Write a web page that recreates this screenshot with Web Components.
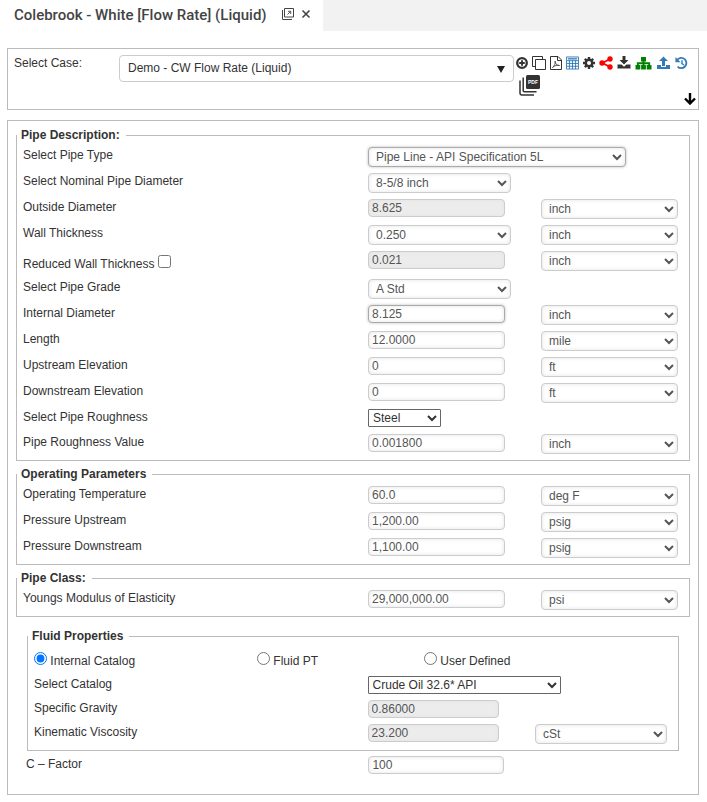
<!DOCTYPE html>
<html lang="en">
<head>
<meta charset="utf-8">
<meta name="viewport" content="width=device-width, initial-scale=1">
<title>Colebrook - White [Flow Rate] (Liquid)</title>
<style>
  body {
    margin: 0;
    background: #fff;
    color: #333;
    font: 12px/16px "Liberation Sans", Arial, sans-serif;
  }
  main {
    display: flex;
    flex-direction: column;
    gap: 10px;
    padding: 17px 8px 8px 7px;
  }
</style>
</head>
<body>
  <page-tab>Colebrook - White [Flow Rate] (Liquid)</page-tab>

  <main>
    <case-bar></case-bar>

    <form-panel>
      <field-group legend="Pipe Description:">
        <form-row label="Select Pipe Type" select="Pipe Line - API Specification 5L" wide active></form-row>
        <form-row label="Select Nominal Pipe Diameter" select="8-5/8 inch"></form-row>
        <form-row label="Outside Diameter" value="8.625" unit="inch" locked></form-row>
        <form-row label="Wall Thickness" select="0.250" unit="inch"></form-row>
        <form-row label="Reduced Wall Thickness" value="0.021" unit="inch" locked check></form-row>
        <form-row label="Select Pipe Grade" select="A Std"></form-row>
        <form-row label="Internal Diameter" value="8.125" unit="inch" active></form-row>
        <form-row label="Length" value="12.0000" unit="mile"></form-row>
        <form-row label="Upstream Elevation" value="0" unit="ft"></form-row>
        <form-row label="Downstream Elevation" value="0" unit="ft"></form-row>
        <form-row label="Select Pipe Roughness" select="Steel" plain="small"></form-row>
        <form-row label="Pipe Roughness Value" value="0.001800" unit="inch"></form-row>
      </field-group>

      <field-group legend="Operating Parameters">
        <form-row label="Operating Temperature" value="60.0" unit="deg F"></form-row>
        <form-row label="Pressure Upstream" value="1,200.00" unit="psig"></form-row>
        <form-row label="Pressure Downstream" value="1,100.00" unit="psig"></form-row>
      </field-group>

      <field-group legend="Pipe Class:">
        <form-row label="Youngs Modulus of Elasticity" value="29,000,000.00" unit="psi"></form-row>
      </field-group>

      <field-group legend="Fluid Properties" inset>
        <fluid-source></fluid-source>
        <form-row label="Select Catalog" select="Crude Oil 32.6* API" plain="large" compact></form-row>
        <form-row label="Specific Gravity" value="0.86000" locked compact></form-row>
        <form-row label="Kinematic Viscosity" value="23.200" unit="cSt" locked></form-row>
      </field-group>

      <form-row slot="footer" label="C – Factor" value="100"></form-row>
    </form-panel>
  </main>

<script>
// Small helper: every element clones its template into an open shadow root
class BaseElement extends HTMLElement {
  constructor () {
    super();
    this.attachShadow({ mode: "open" });
  }
  connectedCallback () {
    const template = document.createElement("template");
    template.innerHTML = this.getStyles() + this.getTemplate();
    this.shadowRoot.replaceChildren(template.content.cloneNode(true));
  }
}

// Icon shapes, each with its own viewBox
const ICONS = {
  popout: ["0 0 12 12", `<g fill="none" stroke="currentColor"><path d="M2.500.5h9v8.500h-9z"/><path d="M.5 2v9.500H10"/><path d="M5.500 6.500l3-3M6 3.300h2.700V6" stroke-width=".9"/></g>`],
  close: ["0 0 10 10", `<path d="M1.500 1.500l7 7M8.500 1.500l-7 7" fill="none" stroke="currentColor" stroke-width="1.600"/>`],
  add: ["0 0 12 12", `<circle cx="6" cy="6" r="4.800" fill="none" stroke="currentColor" stroke-width="2.300"/><path d="M6 3.200v5.600M3.200 6h5.600" fill="none" stroke="currentColor" stroke-width="1.900"/>`],
  copy: ["0 0 14 14", `<path d="M3.500 3.500h10v10h-10zM3.500 10.500h-3v-10h10v3" fill="none" stroke="currentColor"/>`],
  pdf: ["0 0 12 14", `<g fill="none" stroke="currentColor"><path d="M.5.5H8l3.500 3.500v9.500H.5zM7.500.5v4h4"/><path d="M2.500 11.500c2-1.500 3.200-4.500 2.700-6.500-.6 2 1.500 4.500 4.300 4.500-2-.7-5 0-7 2z" stroke-width=".8"/></g>`],
  table: ["0 0 14 14", `<path d="M.5.5h13v13H.5z" fill="none" stroke="currentColor"/><path d="M2 2.500h10" stroke="currentColor" stroke-width="1.400"/><path d="M1 4.500h12M1 7.500h12M1 10.500h12M3.700 4v9.500M7 4v9.500M10.300 4v9.500" fill="none" stroke="currentColor"/>`],
  gear: ["0 0 12 12", `<g fill="none" stroke="currentColor"><circle cx="6" cy="6" r="3.200" stroke-width="2.400"/><path d="M6 0v2.500M6 9.500V12M0 6h2.500M9.500 6H12M1.800 1.800l1.700 1.700M8.500 8.500l1.700 1.700M1.800 10.200l1.700-1.700M8.500 3.500l1.700-1.700" stroke-width="2.400"/></g>`],
  share: ["0 0 14 14", `<path d="M11 3L3.500 7l7.500 4" fill="none" stroke="currentColor" stroke-width="1.900"/><g fill="currentColor"><circle cx="11" cy="3" r="2.700"/><circle cx="3" cy="7" r="2.700"/><circle cx="11" cy="11" r="2.700"/></g>`],
  download: ["0 0 14 14", `<path fill="currentColor" d="M5.500 0h3v4h3L7 8.500 2.500 4h3zM.5 8.500h4L7 10.700 9.500 8.500h4v4H.5z"/>`],
  tree: ["0 0 17 14", `<path fill="currentColor" d="M6 1h5v4.500H6zM.5 9h4.800v4.500H.5zM6.100 9h4.800v4.500H6.100zM11.700 9h4.800v4.500h-4.800z"/><path d="M8.500 4v6M2.800 10V7.200h11.400V10" fill="none" stroke="currentColor" stroke-width="1.900"/>`],
  upload: ["0 0 14 14", `<path fill="currentColor" d="M7 .5L11.500 5h-3v5h-3V5h-3zM.5 9h4v2h5V9h4v4H.5z"/>`],
  history: ["0 0 14 14", `<path d="M2.500 3.500a5.500 5.500 0 1 1 .3 7.300" fill="none" stroke="currentColor" stroke-width="2"/><path fill="currentColor" d="M.5.5v5.700h5.500z"/><path d="M7.500 4v3.700l2.200 1.500" fill="none" stroke="currentColor" stroke-width="1.500"/>`],
  pages: ["0 0 21 21", `<rect x="7" y="0" width="14" height="14" rx="1.500" fill="currentColor"/><path d="M4.200 2.500v13q0 1.200 1.200 1.200h12.100M1 5.500V18q0 2 2 2h12" fill="none" stroke="currentColor" stroke-width="1.500"/><text x="14" y="9" text-anchor="middle" font-family="Liberation Sans, Arial, sans-serif" font-size="5" font-weight="700" fill="#fff">PDF</text>`],
  down: ["0 0 12 12", `<path d="M6 0v10M1 5.500l5 5 5-5" fill="none" stroke="currentColor" stroke-width="2.400"/>`]
};

class ToolIcon extends BaseElement {
  getTemplate () {
    const [box, shape] = ICONS[this.getAttribute("name")];
    const w = this.getAttribute("width") || 14;
    const h = this.getAttribute("height") || 14;
    return `
      <button type="button" aria-label="${this.getAttribute("label")}">
        <svg viewBox="${box}" width="${w}" height="${h}" aria-hidden="true">${shape}</svg>
      </button>
    `;
  }
  getStyles () {
    return `
      <style>
        :host { display: block; }
        button {
          display: block;
          padding: 0;
          border: 0;
          background: none;
          color: inherit;
          cursor: pointer;
        }
        svg { display: block; }
      </style>
    `;
  }
}

class PageTab extends BaseElement {
  getTemplate () {
    return `
      <div class="tab">
        <h1><slot></slot></h1>
        <tool-icon name="popout" label="Open in new window" width="12" height="12"></tool-icon>
        <tool-icon name="close" label="Close tab" width="10" height="10"></tool-icon>
      </div>
    `;
  }
  getStyles () {
    return `
      <style>
        :host { display: flex; background: #f2f2f2; }
        .tab {
          display: flex;
          align-items: flex-start;
          padding: 0 12px 0 14px;
          background: #fff;
          color: #444;
        }
        h1 {
          margin: 0 15px 0 0;
          font: 500 15px/31px Roboto, "Liberation Sans", sans-serif;
        }
        tool-icon { margin-top: 8px; }
        tool-icon + tool-icon { margin: 9px 0 0 7px; }
      </style>
    `;
  }
}

class CaseBar extends BaseElement {
  getTemplate () {
    return `
      <label for="case">Select Case:</label>
      <div class="picker">
        <select id="case"><option>Demo - CW Flow Rate (Liquid)</option></select>
      </div>
      <div class="tools">
        <div class="line">
          <tool-icon name="add" label="Add case" width="12" height="12"></tool-icon>
          <tool-icon name="copy" label="Copy case"></tool-icon>
          <tool-icon name="pdf" label="Save as PDF" width="12"></tool-icon>
          <tool-icon name="table" label="Table" class="blue" width="13"></tool-icon>
          <tool-icon name="gear" label="Settings" width="12" height="12"></tool-icon>
          <tool-icon name="share" label="Share" class="red"></tool-icon>
          <tool-icon name="download" label="Download"></tool-icon>
          <tool-icon name="tree" label="Hierarchy" class="green" width="17"></tool-icon>
          <tool-icon name="upload" label="Upload" class="blue" width="15"></tool-icon>
          <tool-icon name="history" label="History" class="blue" width="13"></tool-icon>
        </div>
        <div class="line low">
          <tool-icon name="pages" label="All PDF reports" width="21" height="21"></tool-icon>
          <tool-icon name="down" label="Scroll down" class="black" width="12" height="12"></tool-icon>
        </div>
      </div>
    `;
  }
  getStyles () {
    return `
      <style>
        :host {
          display: flex;
          align-items: flex-start;
          padding: 6px 2px 4px 6px;
          border: 1px solid #bbb;
        }
        label { flex: 0 0 105px; }
        .picker {
          flex: 1;
          position: relative;
          margin-right: 2px;
        }
        .picker::after {
          content: "";
          position: absolute;
          top: 11px;
          right: 9px;
          border: 4px solid transparent;
          border-top: 7px solid #222;
          border-bottom: 0;
          pointer-events: none;
        }
        select {
          display: block;
          width: 100%;
          height: 27px;
          padding: 0 24px 2px 8px;
          border: 1px solid #ccc;
          border-radius: 4px;
          background: #fff;
          color: #333;
          font: inherit;
          appearance: none;
        }
        .tools {
          flex: 0 0 180px;
          display: flex;
          flex-direction: column;
          gap: 4px;
        }
        .line {
          display: flex;
          align-items: center;
          gap: 4px;
          height: 16px;
        }
        .low {
          align-items: flex-start;
          justify-content: space-between;
          height: 30px;
          padding-left: 3px;
        }
        .low .black { align-self: flex-end; color: #000; }
        .blue { color: #337ab7; }
        .red { color: #f00; }
        .green { color: #008000; }
      </style>
    `;
  }
}

class FormPanel extends BaseElement {
  getTemplate () {
    return `
      <form>
        <slot></slot>
        <div class="footer"><slot name="footer"></slot></div>
      </form>
    `;
  }
  getStyles () {
    return `
      <style>
        :host {
          display: block;
          padding: 6px 8px 12px;
          border: 1px solid #bbb;
        }
        form {
          display: flex;
          flex-direction: column;
          gap: 5px;
        }
        .footer { padding: 0 3px 0 4px; }
      </style>
    `;
  }
}

class FieldGroup extends BaseElement {
  getTemplate () {
    return `
      <fieldset>
        <legend>${this.getAttribute("legend")}</legend>
        <slot></slot>
      </fieldset>
    `;
  }
  getStyles () {
    return `
      <style>
        :host { display: block; }
        :host([inset]) { margin: 6px 11px 0; }
        fieldset {
          min-width: 0;
          margin: 0;
          padding: 4px 0 0;
          border: 1px solid #bbb;
        }
        legend {
          padding: 0 6px 0 4px;
          font-weight: 700;
        }
      </style>
    `;
  }
}

class FormRow extends BaseElement {
  getTemplate () {
    const label = this.getAttribute("label");
    const unit = this.getAttribute("unit");
    const check = this.hasAttribute("check")
      ? `<label class="check">${label} <input type="checkbox"></label>`
      : `<label for="field">${label}</label>`;
    return `
      ${check}
      <div class="field">${this.getControl(label)}</div>
      ${unit ? `<select class="unit" aria-label="${label} unit"><option>${unit}</option></select>` : ""}
    `;
  }
  getControl (label) {
    if (this.hasAttribute("select")) {
      return `<select id="field"><option>${this.getAttribute("select")}</option></select>`;
    }
    const locked = this.hasAttribute("locked") ? "readonly" : "";
    return `<input id="field" type="text" aria-label="${label}" value="${this.getAttribute("value")}" ${locked}>`;
  }
  getStyles () {
    return `
      <style>
        :host {
          display: grid;
          grid-template-columns: 345fr 173fr 148fr;
          align-items: start;
          min-height: 26px;
          padding-left: 6px;
        }
        :host([check]) { min-height: 28px; }
        :host([plain]) { min-height: 25px; }
        :host([compact]) { min-height: 24px; }
        .field {
          min-width: 0;
          padding-right: 36px;
        }
        .check { padding-top: 4px; }
        input[type=checkbox] {
          margin: 0;
          vertical-align: baseline;
        }
        select, input[type=text] {
          display: block;
          box-sizing: border-box;
          width: 100%;
          height: 18px;
          margin: 0;
          padding: 0 3px;
          border: 1px solid #ccc;
          border-radius: 4px;
          background: #fff;
          color: #555;
          font: inherit;
          line-height: normal;
          box-shadow: inset 0 0 4px #e4e4e4;
        }
        select { height: 20px; padding: 0 5px 0 3px; }
        .field select { width: calc(100% + 6px); }
        .unit { width: calc(100% - 11px); }
        input[readonly] { background: #ececec; }
        :host([active]) #field {
          border-color: #aaa;
          box-shadow: 0 0 3px #bbb, inset 0 0 4px #e4e4e4;
        }
        :host([wide]) .field { grid-column: 2 / 4; padding-right: 69px; }
        :host([plain]) #field {
          width: 73px;
          height: 18px;
          padding: 0;
          border-color: #666;
          border-radius: 1px;
          color: #333;
          box-shadow: none;
        }
        :host([plain=large]) .field { grid-column: 2 / 4; }
        :host([plain=large]) #field { width: 193px; }
      </style>
    `;
  }
}

class FluidSource extends BaseElement {
  getTemplate () {
    const radios = ["Internal Catalog", "Fluid PT", "User Defined"].map((text, i) => `
      <label><input type="radio" name="source" ${i === 0 ? "checked" : ""}> ${text}</label>
    `);
    return radios.join("");
  }
  getStyles () {
    return `
      <style>
        :host {
          display: grid;
          grid-template-columns: 223fr 167fr 254fr;
          min-height: 28px;
          padding-left: 6px;
        }
        label { padding-top: 4px; }
        input { margin: 0; vertical-align: baseline; }
      </style>
    `;
  }
}

customElements.define("tool-icon", ToolIcon);
customElements.define("page-tab", PageTab);
customElements.define("case-bar", CaseBar);
customElements.define("form-panel", FormPanel);
customElements.define("field-group", FieldGroup);
customElements.define("form-row", FormRow);
customElements.define("fluid-source", FluidSource);
</script>
</body>
</html>
